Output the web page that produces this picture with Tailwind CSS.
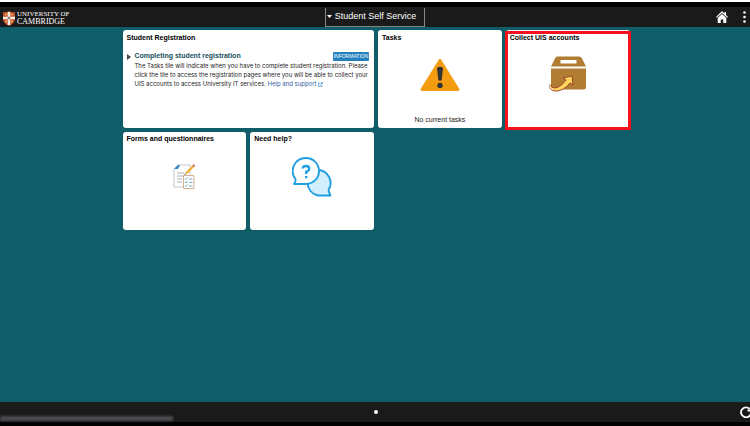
<!DOCTYPE html>
<html lang="en">
<head>
<meta charset="utf-8">
<meta name="viewport" content="width=device-width, initial-scale=1">
<title>Student Self Service</title>
<script src="https://cdn.jsdelivr.net/npm/@tailwindcss/browser@4"></script>
</head>
<body class="flex min-h-screen flex-col bg-[#0f5d69] font-['Liberation_Sans',Arial,sans-serif] text-[7px] text-black">
  <header class="grid h-[27px] shrink-0 grid-cols-[1fr_auto_1fr] items-start border-t-2 border-white bg-[#1a1a1a]">
    <div class="col-span-3 h-[5px] bg-black"></div>
    <a href="#" aria-label="University of Cambridge" class="flex items-center gap-[2px] pt-[3px] pl-[3px] font-['Liberation_Serif',serif] text-white">
      <svg class="h-[15px] w-3" viewBox="0 0 12 15" aria-hidden="true">
        <path d="M0 1Q3 2 6 0Q9 2 12 1V8Q12 12 6 15Q0 12 0 8Z" fill="#c8512f"/>
        <path d="M6 1V14M0 7H12" stroke="#f5eee5" stroke-width="2.6"/>
        <path d="M6 5.500V8.500M4.500 7H7.500" stroke="#7a5a50" stroke-width="1"/>
        <path d="M2 3.500H4M8 3.500H10M2 10.500H4M8 10.500H10" stroke="#e5b456" stroke-width="1.500"/>
      </svg>
      <span class="block leading-[7px]"><span class="block text-[7px]">UNIVERSITY OF</span><span class="block text-[8px]">CAMBRIDGE</span></span>
    </a>
    <button class="flex h-[19px] items-center gap-[3px] border border-t-0 border-[#858585] pr-2 pl-px text-[9px] text-white">
      <svg class="h-[3px] w-[5px]" viewBox="0 0 5 3" fill="currentColor" aria-hidden="true"><path d="M0 0H5L2.500 3Z"/></svg>
      <span>Student Self Service</span>
    </button>
    <div class="flex items-center justify-end gap-[15px] pt-[3px] pr-1 text-white">
      <button aria-label="Home"><svg class="block h-3 w-3" viewBox="0 0 12 12" fill="currentColor" aria-hidden="true"><path d="M6 0L8.500 2.400V1H10V3.900L12 6L11.200 6.800L6 1.900L.8 6.800L0 6Z"/><path d="M6 3L10.300 7V12H7.300V8.500H4.700V12H1.700V7Z"/></svg></button>
      <button aria-label="Actions"><svg class="block h-3 w-[3px]" viewBox="0 0 3 12" fill="currentColor" aria-hidden="true"><circle cx="1.500" cy="1.500" r="1.300"/><circle cx="1.500" cy="6" r="1.300"/><circle cx="1.500" cy="10.500" r="1.300"/></svg></button>
    </div>
  </header>

  <main class="grow pt-[3px] pl-[2px]">
    <div class="mx-auto grid max-w-[507px] auto-rows-[98px] grid-cols-4 gap-1">
      <section class="col-span-2 rounded-[3px] bg-white px-1 pt-1">
        <h2 class="font-bold leading-2">Student Registration</h2>
        <div class="flex gap-1 pt-[10px]">
          <svg class="mt-[2px] h-[6px] w-1 shrink-0" viewBox="0 0 4 6" aria-hidden="true"><path d="M0 0L4 3L0 6Z" fill="#444"/></svg>
          <div class="min-w-0 grow">
            <div class="flex h-[9px] items-center justify-between">
              <h3 class="font-bold text-[#164f5b]">Completing student registration</h3>
              <span class="mr-px flex h-[9px] w-9 items-center justify-center rounded-[1px] bg-[#2380bd] text-[5px] text-white">INFORMATION</span>
            </div>
            <p class="font-[Inter,sans-serif] text-[6px] leading-[9px] whitespace-nowrap text-[#222]">The Tasks tile will indicate when you have to complete student registration. Please<br>click the tile to access the registration pages where you will be able to collect your<br>UIS accounts to access University IT services. <a href="#" class="text-[#315f9e]">Help and support<svg class="ml-px inline-block h-[5px] w-[5px]" viewBox="0 0 5 5" fill="none" stroke="#4b9ad0" stroke-width=".8" aria-hidden="true"><path d="M2 1H.5V4.500H4V3M2 3L4.500 .5M2.800 .5H4.500V2.200"/></svg></a></p>
          </div>
        </div>
      </section>

      <section class="flex flex-col rounded-[3px] bg-white px-1 pt-1 pb-1">
        <h2 class="font-bold leading-2">Tasks</h2>
        <svg class="mx-auto mt-[17px] h-8 w-10" viewBox="0 0 40 32" aria-hidden="true"><path d="M20 1.500L38 30.500H2Z" fill="#f39c12" stroke="#f39c12" stroke-width="3" stroke-linejoin="round"/><path d="M17 9Q20 6.500 23 9L21.700 21Q20 22.500 18.300 21Z" fill="#303236"/><circle cx="20" cy="26.500" r="2.700" fill="#303236"/></svg>
        <p class="mt-auto text-center leading-2 text-[#222]">No current tasks</p>
      </section>

      <section class="relative rounded-[3px] bg-white px-1 pt-1">
        <h2 class="font-bold leading-2">Collect UIS accounts</h2>
        <svg class="mx-auto mt-[14px] h-9 w-[38px]" viewBox="0 0 38 36" aria-hidden="true">
          <path fill-rule="evenodd" d="M8 .5H30Q32 .5 33 2.500L37 10.500H2L6 2.500Q7 .5 8 .5ZM11.500 4V7.500H27.500V4Z" fill="#b07d32"/>
          <path d="M2 12.500H37V31Q37 33.500 34.500 33.500H4.500Q2 33.500 2 31Z" fill="#b07d32"/>
          <path d="M1 28Q-1 33 5 35Q14 36 21 27L24 29L23 20L14 22L17 24Q11 32 5 32Q1 31 1 28Z" fill="#ffd45c" stroke="#9a3b27" stroke-width=".9"/>
          <path d="M1 28Q0 32 4 33" fill="none" stroke="#fff" stroke-width="1"/>
        </svg>
        <div class="pointer-events-none absolute -inset-x-px top-px -bottom-[2px] border-[3px] border-[#f5121d]"></div>
      </section>

      <section class="rounded-[3px] bg-white px-1 pt-[3px]">
        <h2 class="font-bold leading-2">Forms and questionnaires</h2>
        <svg class="mx-auto mt-[21px] h-[26px] w-[22px]" viewBox="0 0 22 26" fill="none" aria-hidden="true">
          <path d="M5 1H17V23H1V5Z" fill="#fff" stroke="#bcc1c6" stroke-width=".9"/><path d="M1 5L5 1H7L5 5Z" fill="#3387c7"/>
          <path d="M4 9H11M4 12H10M4 15H9M4 18H9" stroke="#a3a8b0" stroke-width=".9"/>
          <path d="M10.500 11.500H21V24.500H10.500Z" fill="#fff" stroke="#d2b490"/>
          <path d="M12 14.500L13 15.500L14.500 13.500M12 18L13 19L14.500 17M12 21.500L13 22.500L14.500 20.500" stroke="#3e9ca0" stroke-width=".8"/>
          <path d="M16 15H19.500M16 18.500H19.500M16 22H19.500" stroke="#75a9cc"/>
          <path d="M13 9.500L20 2.500" stroke="#f0ad24" stroke-width="2.200"/><path d="M20 2.500L21.500 1" stroke="#c66350" stroke-width="2.200"/><path d="M11.500 11L13 9.500" stroke="#555"/>
        </svg>
      </section>

      <section class="rounded-[3px] bg-white px-1 pt-[3px]">
        <h2 class="font-bold leading-2">Need help?</h2>
        <svg class="mx-auto mt-[14px] h-10 w-10" viewBox="0 0 40 40" fill="none" stroke="#209fe3" stroke-width="1.900" stroke-linejoin="round" aria-hidden="true">
          <path d="M26 13A13 13 0 0 1 36.500 33Q37 36 38.500 38.500H26A13 13 0 0 1 26 13Z" fill="#d3effd"/>
          <path d="M14 1A13 13 0 1 1 14 27H2Q4 24.500 3.500 22A13 13 0 0 1 14 1Z" fill="#fff"/>
          <path d="M10.800 11.500Q10.800 9 14 9T17.200 12Q17 14 14.200 14.700V17M14.200 19V21.200" stroke-width="2.400"/>
        </svg>
      </section>
    </div>
  </main>

  <footer class="grid h-6 shrink-0 grid-cols-[1fr_auto_1fr] items-center border-b-4 border-black bg-[#1a1a1a] text-white">
    <div class="mt-3 h-[5px] w-[173px] bg-[#4a4a50] blur-[1px]"></div>
    <span class="ml-[2px] h-1 w-1 rounded-full bg-white"></span>
    <button aria-label="Refresh" class="-mr-[2px] justify-self-end"><svg class="block h-3 w-3" viewBox="0 0 12 12" fill="none" stroke="currentColor" stroke-width="1.800" aria-hidden="true"><path d="M9.800 3A5 5 0 1 0 11 7M7.500 4.500H11V1"/></svg></button>
  </footer>
</body>
</html>
